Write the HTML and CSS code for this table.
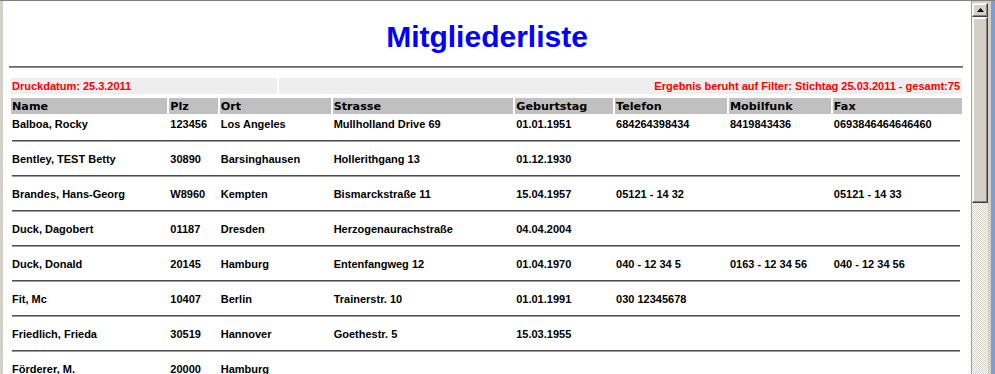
FILE: index.html
```html
<!DOCTYPE html>
<html>
<head>
    <meta charset="utf-8">
    <title>Mitgliederliste</title>
    <link rel="stylesheet" href="styles.css">
</head>
<body>
    <div class="window">
        <div class="page">
            <h1 class="title">Mitgliederliste</h1>
            <hr class="rule">

            <div class="info">
                <div class="info-date">Druckdatum: 25.3.2011</div>
                <div class="info-filter">Ergebnis beruht auf Filter: Stichtag 25.03.2011 - gesamt:75</div>
            </div>

            <table class="members">
                <thead>
                    <tr>
                        <th class="c-name">Name</th>
                        <th class="c-plz">Plz</th>
                        <th class="c-ort">Ort</th>
                        <th class="c-str">Strasse</th>
                        <th class="c-geb">Geburtstag</th>
                        <th class="c-tel">Telefon</th>
                        <th class="c-mob">Mobilfunk</th>
                        <th class="c-fax">Fax</th>
                    </tr>
                </thead>
                <tbody>
                    <tr>
                        <td>Balboa, Rocky</td><td>123456</td><td>Los Angeles</td><td>Mullholland Drive 69</td>
                        <td>01.01.1951</td><td>684264398434</td><td>8419843436</td><td>0693846464646460</td>
                    </tr>
                    <tr class="sep"><td colspan="8"><hr></td></tr>
                    <tr>
                        <td>Bentley, TEST Betty</td><td>30890</td><td>Barsinghausen</td><td>Hollerithgang 13</td>
                        <td>01.12.1930</td><td></td><td></td><td></td>
                    </tr>
                    <tr class="sep"><td colspan="8"><hr></td></tr>
                    <tr>
                        <td>Brandes, Hans-Georg</td><td>W8960</td><td>Kempten</td><td>Bismarckstraße 11</td>
                        <td>15.04.1957</td><td>05121 - 14 32</td><td></td><td>05121 - 14 33</td>
                    </tr>
                    <tr class="sep"><td colspan="8"><hr></td></tr>
                    <tr>
                        <td>Duck, Dagobert</td><td>01187</td><td>Dresden</td><td>Herzogenaurachstraße</td>
                        <td>04.04.2004</td><td></td><td></td><td></td>
                    </tr>
                    <tr class="sep"><td colspan="8"><hr></td></tr>
                    <tr>
                        <td>Duck, Donald</td><td>20145</td><td>Hamburg</td><td>Entenfangweg 12</td>
                        <td>01.04.1970</td><td>040 - 12 34 5</td><td>0163 - 12 34 56</td><td>040 - 12 34 56</td>
                    </tr>
                    <tr class="sep"><td colspan="8"><hr></td></tr>
                    <tr>
                        <td>Fit, Mc</td><td>10407</td><td>Berlin</td><td>Trainerstr. 10</td>
                        <td>01.01.1991</td><td>030 12345678</td><td></td><td></td>
                    </tr>
                    <tr class="sep"><td colspan="8"><hr></td></tr>
                    <tr>
                        <td>Friedlich, Frieda</td><td>30519</td><td>Hannover</td><td>Goethestr. 5</td>
                        <td>15.03.1955</td><td></td><td></td><td></td>
                    </tr>
                    <tr class="sep"><td colspan="8"><hr></td></tr>
                    <tr>
                        <td>Förderer, M.</td><td>20000</td><td>Hamburg</td><td></td>
                        <td></td><td></td><td></td><td></td>
                    </tr>
                    <tr class="sep"><td colspan="8"><hr></td></tr>
                </tbody>
            </table>
        </div>

        <div class="scrollbar">
            <div class="sb-button">
                <svg width="7" height="4" viewBox="0 0 7 4"><path d="M3.5 0 L7 4 L0 4 Z" fill="#000"/></svg>
            </div>
            <div class="sb-thumb"></div>
            <div class="sb-track"></div>
        </div>
        <div class="frame-edge"></div>
    </div>
</body>
</html>
```

FILE: styles.css
```css
* {
    margin: 0;
    padding: 0;
    box-sizing: border-box;
}

body {
    background: #fff;
    font-family: 'Liberation Sans', Arial, sans-serif;
    color: #000;
    overflow: hidden;
}

.window {
    display: flex;
    height: 374px;
    border-top: 1px solid #808080;
    overflow: hidden;
}

/* printable member list */
.page {
    flex: 1;
    min-width: 0;
    padding-top: 18px;
    background: #fff;
    border-left: 3px solid #d4d0c8;
    overflow: hidden;
}

.title {
    font-family: 'Liberation Sans', Arial, sans-serif;
    font-size: 30px;
    font-weight: bold;
    line-height: 35px;
    color: #0000ff;
    text-align: center;
}

.rule {
    height: 0;
    margin: 12px 8px 0 6px;
    border: 0;
    border-top: 1px solid #6a6a6a;
    border-bottom: 1px solid #8a8a8a;
}

.info {
    display: flex;
    gap: 2px;
    margin: 10px 9px 0 8px;
    color: #ff0000;
    font-size: 11px;
    font-weight: bold;
    line-height: 13px;
}

.info-date {
    width: 266px;
    padding: 2px 0 1px 1px;
    background: #eeeeee;
}

.info-filter {
    flex: 1;
    padding: 2px 2px 1px 0;
    background: #eeeeee;
    text-align: right;
}

.members {
    width: 955px;
    margin: 2px 0 0 6px;
    table-layout: fixed;
    border-collapse: separate;
    border-spacing: 2px;
}

.members th {
    padding: 2px 0 1px 1px;
    background: #c0c0c0;
    font-family: 'DejaVu Sans', Verdana, sans-serif;
    font-size: 11.2px;
    font-weight: bold;
    line-height: 13px;
    text-align: left;
    white-space: nowrap;
}

.c-name { width: 155px; }
.c-plz { width: 48px; }
.c-ort { width: 110px; }
.c-str { width: 179px; }
.c-geb { width: 97px; }
.c-tel { width: 111px; }
.c-mob { width: 101px; }
.c-fax { width: 128px; }

.members td {
    padding: 2px 0 2px 1px;
    font-size: 11px;
    font-weight: bold;
    line-height: 13px;
    white-space: nowrap;
    overflow: hidden;
}

.members .sep td {
    padding: 5px 2px 7px 1px;
}

.members .sep hr {
    height: 0;
    border: 0;
    border-top: 1px solid #4e4e4e;
    border-bottom: 1px solid #9c9c9c;
}

/* classic vertical scrollbar */
.scrollbar {
    width: 17px;
    display: flex;
    flex-direction: column;
    padding-top: 2px;
    border-left: 1px solid #a0a0a0;
    background: #d4d0c8;
}

.sb-button,
.sb-thumb {
    background: #d4d0c8;
    border: 1px solid;
    border-color: #f4f2ee #404040 #404040 #f4f2ee;
    box-shadow: inset -1px -1px 0 #808080, inset 1px 1px 0 #fff;
}

.sb-button {
    height: 14px;
    display: flex;
    align-items: center;
    justify-content: center;
}

.sb-thumb {
    height: 186px;
}

.sb-track {
    flex: 1;
    background-color: #fff;
    background-image: repeating-conic-gradient(#d4d0c8 0 25%, #fff 0 50%);
    background-size: 2px 2px;
}

.frame-edge {
    width: 7px;
    border-left: 3px solid #d4d0c8;
    background: #7e9cd0;
}
```
